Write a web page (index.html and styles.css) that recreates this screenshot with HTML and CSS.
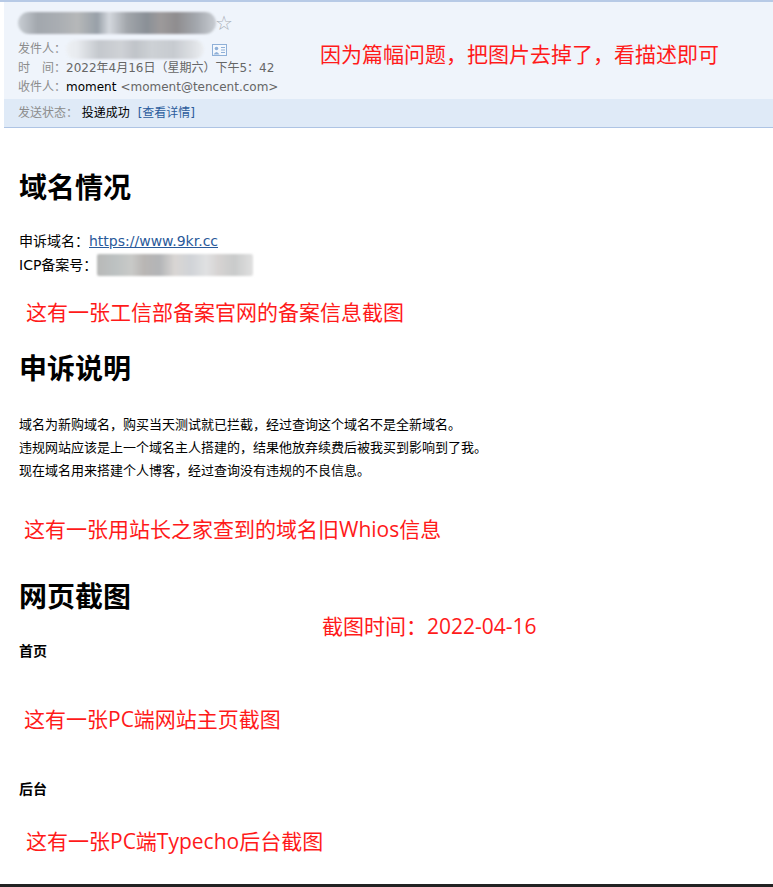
FILE: index.html
```html
<!DOCTYPE html>
<html>

<head>
    <meta charset="UTF-8">
    <meta name="viewport" content="width=device-width, initial-scale=1.0">
    <title>域名申诉</title>
    <link rel="stylesheet" href="styles.css">
</head>

<body>
    <div class="page">
        <div class="mail-head">
            <div class="head-main">
                <div class="meta">
                    <div class="subject">
                        <span class="blur blur-subject"></span>
                        <span class="star">☆</span>
                    </div>
                    <div class="row">
                        <span class="label">发件人：</span>
                        <span class="blur blur-sender"></span>
                        <svg class="card" width="15" height="12" viewBox="0 0 15 12">
                            <rect x="0.5" y="0.5" width="14" height="11" fill="#f4f8fd" stroke="#8fb0d8" />
                            <circle cx="4.5" cy="4.5" r="1.8" fill="#8fb0d8" />
                            <path d="M1.5 10.5 Q4.5 5.5 7.5 10.5 Z" fill="#8fb0d8" />
                            <rect x="9" y="3" width="4" height="1" fill="#8fb0d8" />
                            <rect x="9" y="5.5" width="4" height="1" fill="#8fb0d8" />
                            <rect x="9" y="8" width="4" height="1" fill="#8fb0d8" />
                        </svg>
                    </div>
                    <div class="row">
                        <span class="label">时&emsp;间：</span>
                        <span class="value">2022年4月16日（星期六）下午5：42</span>
                    </div>
                    <div class="row">
                        <span class="label">收件人：</span>
                        <span class="name">moment</span>
                        <span class="value">&lt;moment@tencent.com&gt;</span>
                    </div>
                </div>
                <div class="note note-top">因为篇幅问题，把图片去掉了，看描述即可</div>
            </div>
            <div class="status">
                <span class="label">发送状态：</span>
                <span class="name">投递成功</span>
                <a class="detail" href="#">[查看详情]</a>
            </div>
        </div>

        <div class="content">
            <h1>域名情况</h1>
            <p class="info">
                申诉域名：<a href="#">https://www.9kr.cc</a><br>
                ICP备案号：<span class="blur blur-icp"></span>
            </p>
            <div class="note note-1">这有一张工信部备案官网的备案信息截图</div>

            <h1>申诉说明</h1>
            <p class="desc">
                域名为新购域名，购买当天测试就已拦截，经过查询这个域名不是全新域名。<br>
                违规网站应该是上一个域名主人搭建的，结果他放弃续费后被我买到影响到了我。<br>
                现在域名用来搭建个人博客，经过查询没有违规的不良信息。
            </p>
            <div class="note note-2">这有一张用站长之家查到的域名旧Whios信息</div>

            <div class="shots">
                <h1>网页截图</h1>
                <div class="note note-time">截图时间：2022-04-16</div>
                <h4 class="sub-home">首页</h4>
                <div class="note note-3">这有一张PC端网站主页截图</div>
                <h4 class="sub-admin">后台</h4>
                <div class="note note-4">这有一张PC端Typecho后台截图</div>
            </div>
        </div>
    </div>
</body>

</html>
```

FILE: styles.css
```css
body {
    margin: 0;
    padding: 0;
    background-color: #fff;
    font-family: "Noto Sans CJK SC", sans-serif;
    color: #000;
}

.page {
    width: 773px;
    height: 887px;
    border-top: 2px solid #b7cae6;
    box-sizing: border-box;
    border-bottom: 3px solid #222;
    overflow: hidden;
}

/* 邮件头部 */
.mail-head {
    margin-left: 4px;
    background-color: #eff4fb;
    border-bottom: 1px solid #aec4e4;
    font-family: "DejaVu Sans", "Noto Sans CJK SC", sans-serif;
}

.head-main {
    display: flex;
    align-items: center;
    padding: 9px 0 2px 14px;
}

.meta {
    width: 302px;
    flex: none;
    font-size: 12px;
}

.subject {
    display: flex;
    align-items: center;
    height: 24px;
    margin-bottom: 5px;
}

.star {
    color: #aab0b8;
    font-size: 20px;
    line-height: 22px;
    margin-left: -1px;
}

.row {
    display: flex;
    align-items: center;
    height: 19px;
    line-height: 19px;
    white-space: nowrap;
}

.label {
    color: #8c8c8c;
}

.value {
    color: #666;
}

.name {
    color: #000;
    margin-right: 4px;
}

.card {
    margin-left: 8px;
}

.status {
    background-color: #dfeaf7;
    height: 28px;
    line-height: 28px;
    padding-left: 14px;
    font-size: 12px;
}

.detail {
    color: #2b5c9c;
    text-decoration: none;
}

/* 打码区域 */
.blur {
    display: inline-block;
    border-radius: 11px;
    filter: blur(1px);
}

.blur-subject {
    width: 198px;
    height: 22px;
    background: linear-gradient(to right,
            #c9ced4 0, #a2a7ad 10%, #a9adb2 20%, #b6b8b9 30%, #98a0a8 40%,
            #d4d8de 46%, #a2a6ab 55%, #8a9097 65%, #9d9a9b 72%, #8f8d8f 80%, #a3a7ad 90%, #c8ccd2 100%);
}

.blur-sender {
    width: 138px;
    height: 19px;
    border-radius: 9px;
    background: linear-gradient(to right,
            #edf0f4 0, #e8ebef 8%, #c4c8cd 24%, #cfd2d6 40%, #c0c4c9 50%,
            #cdd1d5 62%, #c7cbd0 78%, #dde0e4 92%, #eceff3 100%);
}

.blur-icp {
    width: 156px;
    height: 22px;
    border-radius: 2px;
    vertical-align: -6px;
    background: linear-gradient(to right,
            #b8b9b8 0, #bdc2c2 12%, #c9cac8 22%, #b9b6b4 30%, #b3b5b7 40%,
            #d9d6d4 50%, #d0d3d7 60%, #e0e1e2 70%, #d6d3d2 78%, #c9cbcb 88%, #e0e0e0 100%);
}

/* 正文 */
.content {
    padding: 0 19px;
}

h1 {
    font-size: 28px;
    line-height: 34px;
    font-weight: bold;
    margin: 0;
}

.content > h1:first-child {
    margin-top: 41px;
}

.info {
    margin: 26px 0 0;
    font-family: "DejaVu Sans", "Noto Sans CJK SC", sans-serif;
    font-size: 14px;
    line-height: 24px;
}

.info a {
    color: #2a5a9a;
}

.desc {
    margin: 28px 0 0;
    font-size: 13px;
    line-height: 23px;
}

.note {
    color: #ff1a1a;
    font-family: "Open Sans", "Noto Sans CJK SC", sans-serif;
    font-size: 21px;
    line-height: 30px;
}

.note-1 {
    margin: 20px 0 23px 7px;
}

.note-2 {
    margin: 33px 0 34px 5px;
}

.shots {
    position: relative;
}

/* 贴在标题右侧的批注 */
.note-time {
    position: absolute;
    left: 303px;
    top: 33px;
}

h4 {
    font-size: 14px;
    line-height: 24px;
    margin: 0;
}

.sub-home {
    margin-top: 26px;
}

.note-3 {
    margin: 42px 0 42px 5px;
}

.note-4 {
    margin: 26px 0 0 7px;
}
```
